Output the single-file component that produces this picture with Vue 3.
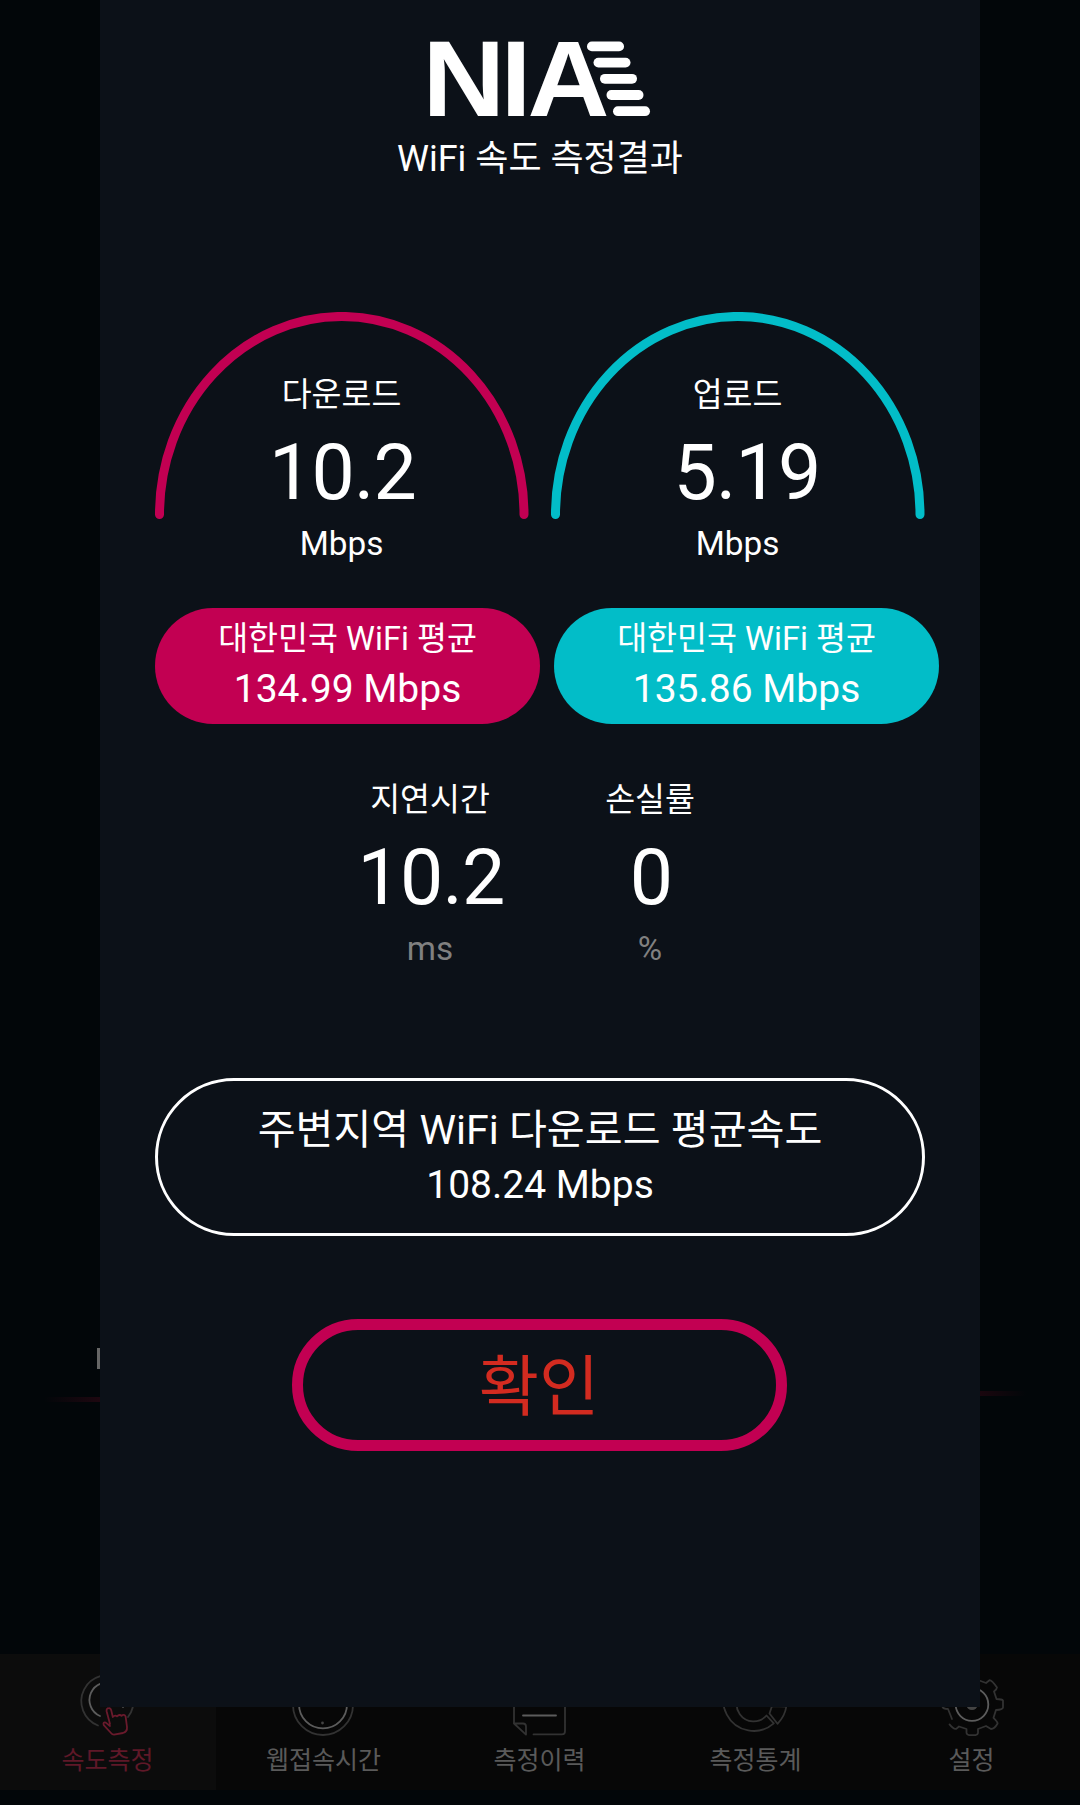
<template>
  <div class="screen">
    <div class="backdrop">
      <span class="hidden-mark"></span>
      <span class="glow glow-left"></span>
      <span class="glow glow-right"></span>
    </div>

    <nav class="tab-bar">
      <div v-for="tab in tabs" :key="tab.id" class="tab" :class="{ active: tab.id === current }">
        <svg class="tab-icon" viewBox="0 0 72 72" fill="none" stroke-width="1.8" stroke-linecap="round" stroke-linejoin="round">
          <g v-if="tab.id === 'speed'">
            <path class="dim" d="M26 57.5A26 26 0 1 1 56 49" />
            <path class="lit" d="M28 48A17.5 17.5 0 1 1 51 39" />
            <path class="hand" d="M38 56L34.6 43.2Q34.2 40.4 36.8 40.2Q38.6 40 39.3 42.6L40.8 49Q43 46.6 45 48.4Q47.6 45.8 49.6 47.8Q52 45.8 53.6 48.4L55 59Q55.4 63.8 51 65L42 66.6Q40.2 66.6 39 65L31.8 57.2Q30.6 53.8 33.8 54.6L38 58" />
          </g>
          <g v-else-if="tab.id === 'web'">
            <circle class="dim" cx="35" cy="37" r="30" />
            <circle class="lit" cx="35" cy="36.4" r="24" />
            <circle class="dot" cx="34.5" cy="55" r="1.4" />
          </g>
          <g v-else-if="tab.id === 'history'">
            <path class="dim" d="M10 55V14Q10 10 14 10H57Q61 10 61 14V63Q61 66.4 58 66.4H29.5" />
            <path class="dim" d="M10 55.5L22 66.6V58.5Q22 55.5 19 55.5Z" />
            <path class="lit" d="M19 47.5H52" />
          </g>
          <g v-else-if="tab.id === 'stats'">
            <path class="dim" d="M53.8 55.3A30.3 30.3 0 1 1 64 33L50.5 34A17 17 0 1 0 46.5 47.5Z" />
            <path class="dim" d="M49.5 45.5L57.5 55.8Q65 48 66.3 38.5L52 38Z" />
          </g>
          <g v-else>
            <path class="dim" d="M16 51L12 41Q7 41 6.4 38.5V33Q6.6 31 11.5 31L14 24L11 20Q16 12 19 12.5L22 15.5L30 12V7Q35 4 42 7V12L50 15L53.5 12.2Q56 12.5 61 19.5Q61 21 58 23.5L60.5 31Q66 31.2 67 32.5V39.5Q66.5 41.8 60 42L57.5 49.8Q61.6 53.6 61.6 55.5Q58.5 61 55 61L50 58L42 61V65Q41.6 67 39.6 67.2H33Q31 67 30.5 65V61L23 58.5L20.5 60.6Q18 62 13.5 56.4" />
            <circle class="lit" cx="36" cy="36.5" r="16.3" />
            <circle class="dot" cx="36" cy="36.5" r="5.6" />
          </g>
        </svg>
        <span class="tab-label">{{ tab.label }}</span>
      </div>
    </nav>

    <section class="modal">
      <header class="head">
        <svg class="logo" viewBox="-10 -30 242 134" fill="#fff">
          <g class="logo-text">
            <text transform="translate(-6.5 75) scale(1.06 1)">N</text>
            <text x="72" y="75">I</text>
            <text transform="translate(98.5 75) scale(1.05 1)">A</text>
          </g>
          <rect v-for="n in 5" :key="n" :x="158 + (n - 1) * 6.5" :y="0.5 + (n - 1) * 16.2" width="37" height="9.8" rx="4.9" />
        </svg>
        <h1 class="title">WiFi 속도 측정결과</h1>
      </header>

      <div class="gauges">
        <div v-for="g in gauges" :key="g.id" class="gauge" :class="g.id">
          <svg class="arc" viewBox="0 0 374 208" fill="none">
            <path d="M4.5 202.5A182.2 198 0 0 1 369 202.5" stroke-width="9" stroke-linecap="round" />
          </svg>
          <div class="label">{{ g.label }}</div>
          <div class="value">{{ g.value }}</div>
          <div class="unit">Mbps</div>
        </div>
      </div>

      <div class="averages">
        <div v-for="g in gauges" :key="g.id" class="average" :class="g.id">
          <div class="avg-name">대한민국 WiFi 평균</div>
          <div class="avg-value">{{ g.average }} Mbps</div>
        </div>
      </div>

      <div class="stats">
        <div v-for="s in stats" :key="s.label" class="stat">
          <div class="label">{{ s.label }}</div>
          <div class="value">{{ s.value }}</div>
          <div class="unit">{{ s.unit }}</div>
        </div>
      </div>

      <div class="nearby">
        <div class="nearby-name">주변지역 WiFi 다운로드 평균속도</div>
        <div class="avg-value">108.24 Mbps</div>
      </div>

      <button class="confirm">확인</button>
    </section>
  </div>
</template>

<script setup>
import { ref } from 'vue'

const current = ref('speed')

const tabs = [
  { id: 'speed', label: '속도측정' },
  { id: 'web', label: '웹접속시간' },
  { id: 'history', label: '측정이력' },
  { id: 'stats', label: '측정통계' },
  { id: 'settings', label: '설정' }
]

const gauges = [
  { id: 'download', label: '다운로드', value: '10.2', average: '134.99' },
  { id: 'upload', label: '업로드', value: '5.19', average: '135.86' }
]

const stats = [
  { label: '지연시간', value: '10.2', unit: 'ms' },
  { label: '손실률', value: '0', unit: '%' }
]
</script>

<style>
body { background: #020609; }
</style>

<style scoped>
.screen {
  position: relative;
  display: flex; flex-direction: column;
  width: 1080px; height: 1805px;
  overflow: hidden;
  background: #020609;
  font-family: Roboto, 'Noto Sans CJK KR', sans-serif;
  color: #fff;
}

/* Dimmed page behind the dialog */
.backdrop { position: relative; flex: 1; }
.glow { position: absolute; height: 5px; width: 56px; }
.glow-left { left: 44px; top: 1397px; background: linear-gradient(to right, transparent, #1e0710); }
.glow-right { left: 980px; top: 1391px; width: 46px; background: linear-gradient(to left, transparent, #1a060e); }
.hidden-mark {
  position: absolute; left: 97px; top: 1348px;
  width: 3px; height: 21px; background: #666;
}

.tab-bar {
  display: flex;
  height: 136px; margin-bottom: 15px;
  background: #070707;
}
.tab {
  display: flex; flex-direction: column; align-items: center;
  width: 216px; padding-top: 14px; box-sizing: border-box;
}
.tab.active { background: #0c0c0c; }
.tab-icon { width: 72px; height: 72px; }
.tab-label { margin: 6px 1px 0 0; font-size: 25px; line-height: 30px; color: #5a5a5a; }
.tab.active .tab-label { color: #5f1828; }
.dim { stroke: #323232; }
.lit { stroke: #5c5c5c; }
.dot { fill: #444; }
.hand { stroke: #6a1a2c; fill: #0c0c0c; }

/* Result dialog */
.modal {
  position: absolute; left: 100px; top: 0;
  display: flex; flex-direction: column;
  width: 880px; height: 1707px;
  padding: 11px 41px 0 55px; box-sizing: border-box;
  background: #0c1118;
}
.head {
  display: flex; flex-direction: column; align-items: center;
  height: 301px; margin-right: 14px;
}
.logo { width: 242px; height: 134px; }
.logo-text { font: bold 108px 'Liberation Sans', sans-serif; }
.title { margin: -8px 0 0; font-size: 36px; line-height: 44px; font-weight: 400; }

.gauges { display: flex; gap: 23px; }
.gauge {
  position: relative;
  width: 373px; height: 252px; padding-top: 63px;
  box-sizing: border-box; text-align: center;
}
.arc { position: absolute; left: 0; top: 0; width: 374px; height: 208px; }
.download .arc { stroke: #c20052; }
.upload .arc { stroke: #02bdc8; }
.label { font-size: 32.5px; line-height: 40px; }
.value { margin-top: 18px; padding-left: 2px; font-size: 77px; line-height: 80px; letter-spacing: -0.8px; }
.upload .value { padding-left: 19px; }
.unit { margin-top: 11px; font-size: 33.3px; line-height: 40px; }

.averages { display: flex; gap: 14px; margin-top: 44px; }
.average {
  width: 385px; height: 116px; padding-top: 9px;
  box-sizing: border-box; border-radius: 58px; text-align: center;
}
.average.download { background: #c20052; }
.average.upload { background: #02bdc8; }
.avg-name { font-size: 32.6px; line-height: 44px; }
.avg-value { margin-top: 5px; font-size: 39px; line-height: 46px; }

.stats { display: flex; justify-content: center; height: 298px; margin: 56px 14px 0 0; }
.stat { width: 220px; text-align: center; }
.stat .unit { color: #808080; }

.nearby {
  height: 158px; margin-right: 14px; padding-top: 24px;
  box-sizing: border-box; border: 3px solid #fff; border-radius: 79px;
  text-align: center;
}
.nearby-name { font-size: 41.2px; line-height: 50px; }
.nearby .avg-value { margin-top: 7px; }

.confirm {
  align-self: center;
  width: 495px; height: 132px; margin: 83px 15px 0 0; padding: 6px 1px 0 0;
  border: 11px solid #c20052; border-radius: 66px;
  background: transparent; color: #d32b20;
  font-family: inherit; font-size: 65.5px; line-height: 104px;
}
</style>
